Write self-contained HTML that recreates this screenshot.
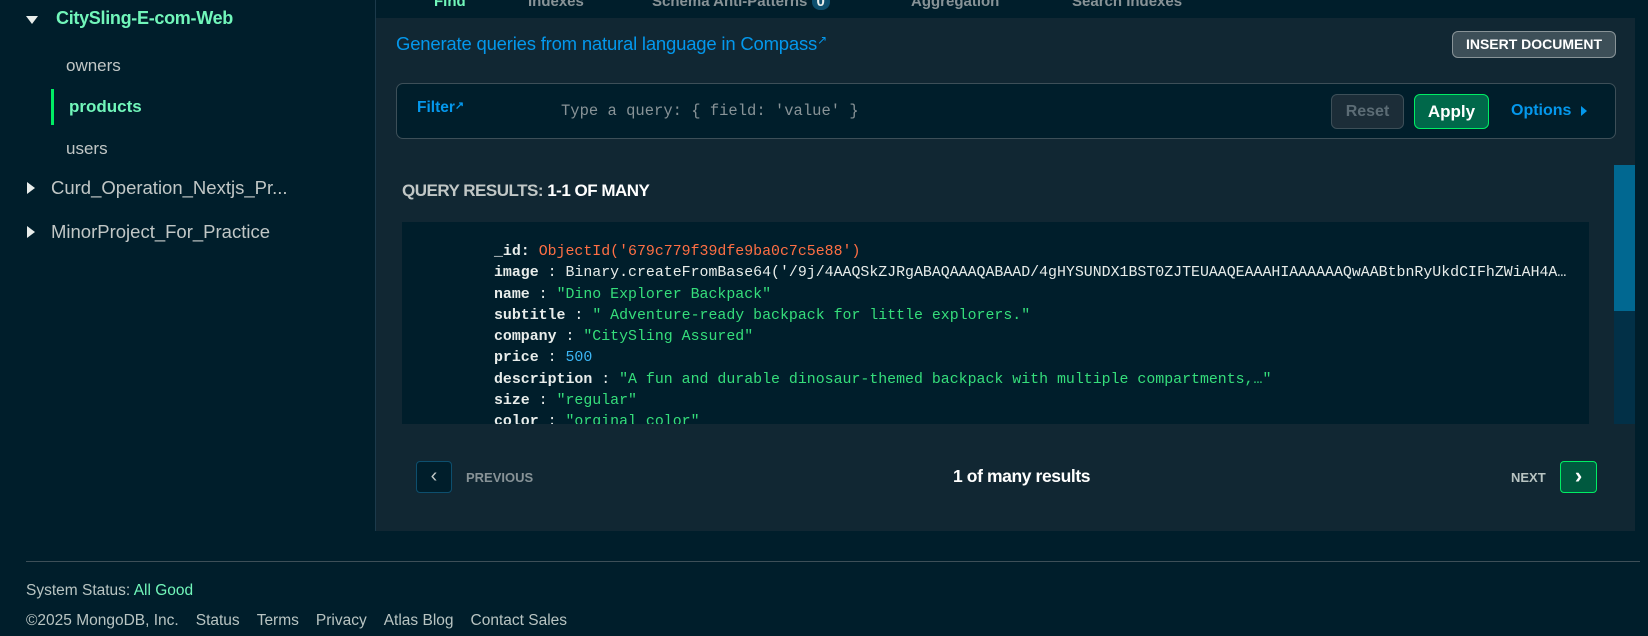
<!DOCTYPE html>
<html><head><meta charset="utf-8"><style>
*{margin:0;padding:0;box-sizing:border-box}
body{width:1648px;height:636px;background:#001e2b;font-family:"Liberation Sans",sans-serif;position:relative;overflow:hidden;color:#e8edeb}
.a{position:absolute;white-space:nowrap}
.mono{font-family:"Liberation Mono",monospace}
.tri-d{width:0;height:0;border-left:6px solid transparent;border-right:6px solid transparent;border-top:8px solid #e8edeb}
.tri-r{width:0;height:0;border-top:6px solid transparent;border-bottom:6px solid transparent;border-left:8px solid #e8edeb}
.code div{height:21.3px;line-height:21.3px}
.k{color:#e8edeb;font-weight:bold}
.s{color:#35de7b}
.r{color:#ff6f44}
.n{color:#3bb6f5}
</style></head><body>
<!-- sidebar -->
<div class="a tri-d" style="left:26px;top:16px"></div>
<div class="a" style="left:56px;top:8px;font-size:18px;font-weight:bold;color:#71f6ba;letter-spacing:-0.3px">CitySling-E-com-Web</div>
<div class="a" style="left:66px;top:56px;font-size:17px;color:#c1c7c6">owners</div>
<div class="a" style="left:51px;top:89px;width:3px;height:36px;background:#00ed64"></div>
<div class="a" style="left:69px;top:97px;font-size:17px;font-weight:bold;color:#71f6ba">products</div>
<div class="a" style="left:66px;top:139px;font-size:17px;color:#c1c7c6">users</div>
<div class="a tri-r" style="left:27px;top:182px"></div>
<div class="a" style="left:51px;top:177px;font-size:18.5px;color:#c1c7c6">Curd_Operation_Nextjs_Pr...</div>
<div class="a tri-r" style="left:27px;top:226px"></div>
<div class="a" style="left:51px;top:221px;font-size:18.5px;color:#c1c7c6">MinorProject_For_Practice</div>
<div class="a" style="left:375px;top:0;width:1px;height:531px;background:#1c3a4b"></div>
<!-- tabs -->
<div class="a" style="left:434px;top:-7px;font-size:15px;font-weight:bold;color:#71f6ba">Find</div>
<div class="a" style="left:528px;top:-7px;font-size:15px;font-weight:bold;color:#889397">Indexes</div>
<div class="a" style="left:652px;top:-7px;font-size:15px;font-weight:bold;color:#889397">Schema Anti-Patterns <span style="background:#0d4f6e;color:#e8edeb;border-radius:8px;padding:0 5px">0</span></div>
<div class="a" style="left:911px;top:-7px;font-size:15px;font-weight:bold;color:#889397">Aggregation</div>
<div class="a" style="left:1072px;top:-7px;font-size:15px;font-weight:bold;color:#889397">Search Indexes</div>
<!-- panel -->
<div class="a" style="left:376px;top:18px;width:1259px;height:513px;background:#112733"></div>
<div class="a" style="left:396px;top:33px;font-size:18.5px;color:#0498ec;letter-spacing:-0.2px">Generate queries from natural language in Compass<span style="font-size:12px;vertical-align:top">&#x2197;</span></div>
<div class="a" style="left:1452px;top:31px;width:164px;height:27px;background:#3d4f58;border:1px solid #889397;border-radius:6px;font-size:14px;font-weight:bold;color:#fff;text-align:center;line-height:25px">INSERT DOCUMENT</div>
<div class="a" style="left:396px;top:83px;width:1220px;height:56px;background:#001e2b;border:1px solid #3d4f58;border-radius:7px"></div>
<div class="a" style="left:417px;top:99px;font-size:15.5px;font-weight:bold;color:#0498ec">Filter<span style="font-size:11px;vertical-align:top">&#x2197;</span></div>
<div class="a mono" style="left:561px;top:102px;font-size:15.5px;color:#889397">Type a query: { field: 'value' }</div>
<div class="a" style="left:1331px;top:94px;width:73px;height:35px;background:#1c2d38;border:1px solid #3d4f58;border-radius:6px;color:#5c6c75;font-size:16px;font-weight:bold;text-align:center;line-height:33px">Reset</div>
<div class="a" style="left:1414px;top:94px;width:75px;height:35px;background:#00684a;border:1px solid #00ed64;border-radius:6px;color:#fff;font-size:17px;font-weight:bold;text-align:center;line-height:33px">Apply</div>
<div class="a" style="left:1511px;top:102px;font-size:16px;font-weight:bold;color:#0498ec">Options</div>
<div class="a" style="left:1581px;top:106px;width:0;height:0;border-top:5px solid transparent;border-bottom:5px solid transparent;border-left:6px solid #0498ec"></div>
<div class="a" style="left:402px;top:181px;font-size:17px;font-weight:bold;color:#c1c7c6;letter-spacing:-0.5px">QUERY RESULTS: <span style="color:#fff">1-1 OF MANY</span></div>
<!-- scrollbar -->
<div class="a" style="left:1614px;top:165px;width:21px;height:259px;background:#023047"></div>
<div class="a" style="left:1614px;top:165px;width:21px;height:146px;background:#016891"></div>
<!-- doc -->
<div class="a" style="left:402px;top:222px;width:1187px;height:202px;background:#001e2b;overflow:hidden">
<div class="a mono code" style="left:92px;top:20px;font-size:14.9px">
<div><span class="k">_id:</span> <span class="r">ObjectId('679c779f39dfe9ba0c7c5e88')</span></div>
<div><span class="k">image</span> : Binary.createFromBase64('/9j/4AAQSkZJRgABAQAAAQABAAD/4gHYSUNDX1BST0ZJTEUAAQEAAAHIAAAAAAQwAABtbnRyUkdCIFhZWiAH4A…</div>
<div><span class="k">name</span> : <span class="s">"Dino Explorer Backpack"</span></div>
<div><span class="k">subtitle</span> : <span class="s">" Adventure-ready backpack for little explorers."</span></div>
<div><span class="k">company</span> : <span class="s">"CitySling Assured"</span></div>
<div><span class="k">price</span> : <span class="n">500</span></div>
<div><span class="k">description</span> : <span class="s">"A fun and durable dinosaur-themed backpack with multiple compartments,…"</span></div>
<div><span class="k">size</span> : <span class="s">"regular"</span></div>
<div><span class="k">color</span> : <span class="s">"orginal color"</span></div>
</div></div>
<!-- pagination -->
<div class="a" style="left:416px;top:461px;width:36px;height:32px;border:1px solid #0d4f6e;border-radius:4px;background:#001e2b;color:#c1c7c6;font-size:20px;text-align:center;line-height:28px">&#x2039;</div>
<div class="a" style="left:466px;top:470px;font-size:13px;font-weight:bold;color:#889397">PREVIOUS</div>
<div class="a" style="left:953px;top:466px;font-size:17.5px;font-weight:bold;color:#fff;letter-spacing:-0.4px">1 of many results</div>
<div class="a" style="left:1511px;top:470px;font-size:13px;font-weight:bold;color:#b8c4c2">NEXT</div>
<div class="a" style="left:1560px;top:461px;width:37px;height:32px;border:1px solid #00ed64;border-radius:4px;background:#00593f;color:#fff;font-size:22px;font-weight:bold;text-align:center;line-height:28px">&#x203A;</div>
<!-- footer -->
<div class="a" style="left:26px;top:561px;width:1614px;height:1px;background:#3d4f58"></div>
<div class="a" style="left:26px;top:582px;font-size:15.5px;color:#b8c4c2">System Status: <span style="color:#71f6ba">All Good</span></div>
<div class="a" style="left:26px;top:612px;font-size:15.5px;color:#b8c4c2">©2025 MongoDB, Inc.<span style="margin-left:17px">Status</span><span style="margin-left:17px">Terms</span><span style="margin-left:17px">Privacy</span><span style="margin-left:17px">Atlas Blog</span><span style="margin-left:17px">Contact Sales</span></div>
</body></html>
